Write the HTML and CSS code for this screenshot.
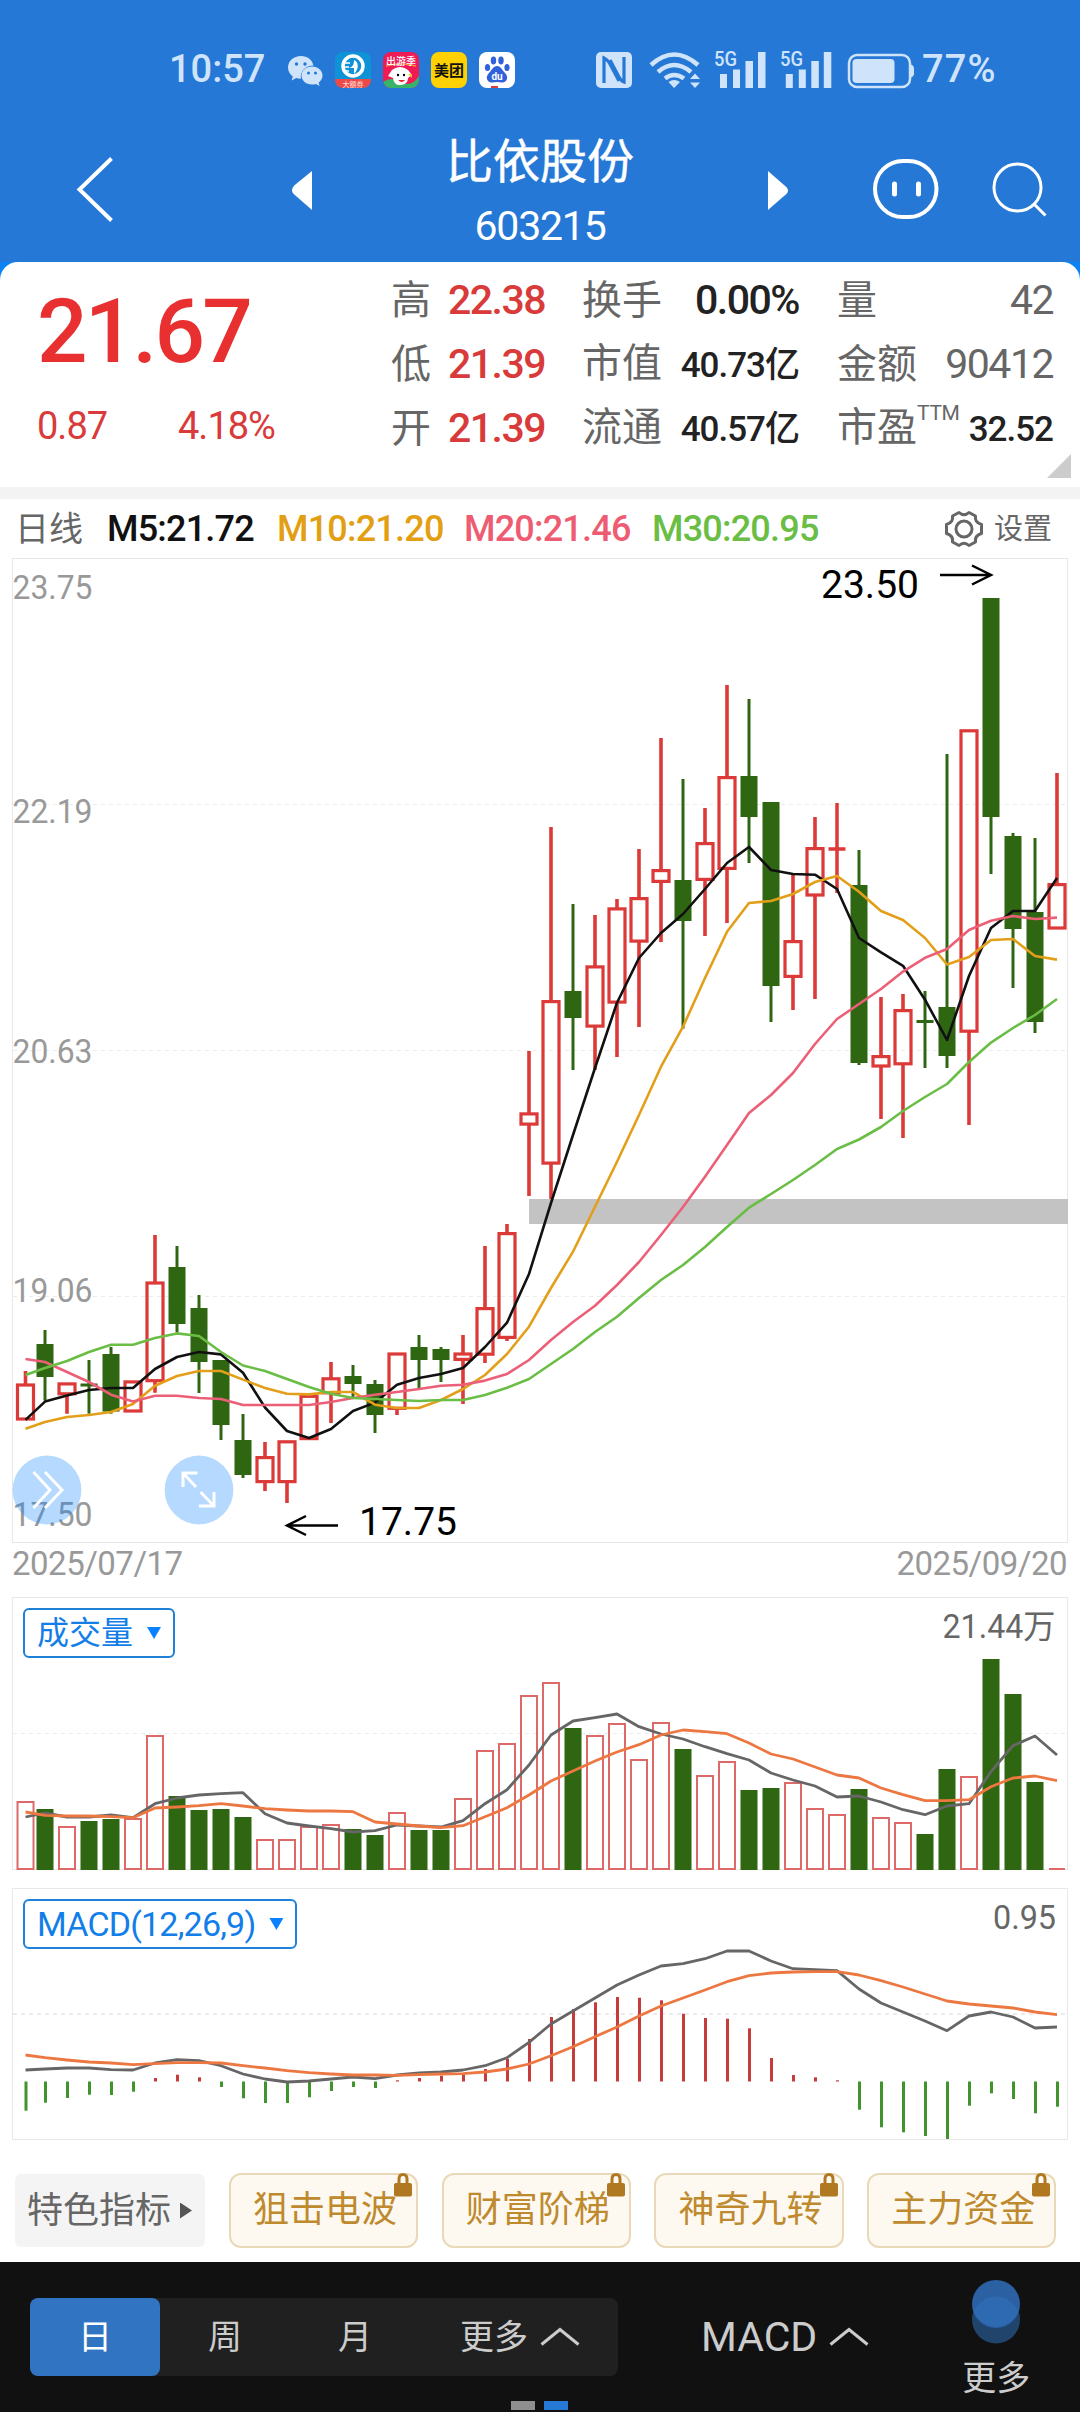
FILE: index.html
```html
<!DOCTYPE html>
<html lang="zh-CN">
<head>
<meta charset="utf-8">
<title>比依股份 603215</title>
<link rel="stylesheet" href="styles.css">
</head>
<body>
<header class="header">
  <div class="status">
    <span class="clock">10:57</span>
    <svg class="apps" width="230" height="40" viewBox="286 50 230 40">
      <g fill="#cfe4fb">
        <path d="M301 56c-7.500 0-13 5-13 11.500 0 3.800 1.900 6.800 4.800 9l-1.200 4 4.600-2.400c1.500.5 3 .7 4.800.7-1.500-7 4.500-13.300 12.400-13.300C312.200 59.800 307.500 56 301 56z"/>
        <path d="M312 66.500c-6 0-10.500 4-10.500 9s4.500 9 10.500 9c1.400 0 2.700-.2 3.900-.6l3.700 2-1-3.200c2.300-1.700 3.900-4.200 3.900-7.200 0-5-4.500-9-10.500-9z"/>
      </g>
      <g fill="#2578d5"><circle cx="296.500" cy="64" r="1.700"/><circle cx="305" cy="64" r="1.700"/><circle cx="308.500" cy="73" r="1.500"/><circle cx="315.500" cy="73" r="1.500"/></g>
      <clipPath id="a1"><rect x="335" y="52" width="36" height="36" rx="8"/></clipPath>
      <g clip-path="url(#a1)"><path fill="#0d93d6" d="M335 52h36v28h-36z"/><path fill="#ec4a48" d="M335 79h36v9h-36z"/>
        <circle cx="353" cy="66" r="10" fill="none" stroke="#fff" stroke-width="3.500"/><path d="M354 60c5 2 5 9 0 14v-6h-5c4-1 5-4 5-8z" fill="#fff"/><path d="M342 63h8M342 67h7M343 71h6" stroke="#fff" stroke-width="1.500"/></g>
      <text x="353" y="86.500" class="tiny" fill="#ffd2c8" font-size="7">大额券</text>
      <clipPath id="a2"><rect x="383" y="52" width="36" height="36" rx="8"/></clipPath>
      <g clip-path="url(#a2)"><path fill="#f01a55" d="M383 52h36v36h-36z"/><path fill="#38b46a" d="M383 82q8-6 18 0t18-6v12h-36z"/><path d="M386 66q14-4 30 0" stroke="#ff8b3d" stroke-width="1.500" fill="none"/>
        <path d="M392 70q8-6 16 0l4 5-4 3q0 6-7 7t-8-7l-5-2z" fill="#fff"/><path d="M408 74h4v4z" fill="#ffc229"/><circle cx="398" cy="75" r="1.200"/><circle cx="404" cy="75" r="1.200"/><path d="M398 80h7q-3 4-7 0z" fill="#e6202e"/></g>
      <text x="401" y="65" class="tiny" fill="#fff" font-size="10">出游季</text>
      <rect x="431" y="52" width="36" height="36" rx="8" fill="#ffd100"/>
      <text x="449" y="75.500" class="tiny" fill="#111" font-size="15" font-weight="700">美团</text>
      <rect x="479" y="52" width="36" height="36" rx="8" fill="#fff"/>
      <g fill="#2f62da"><ellipse cx="493.500" cy="60.500" rx="2.700" ry="4"/><ellipse cx="501" cy="60.500" rx="2.700" ry="4"/><ellipse cx="487.500" cy="67.500" rx="2.600" ry="3.600"/><ellipse cx="507" cy="67.500" rx="2.600" ry="3.600"/><path d="M497 66c4 0 5 4 8 7 4 4 2 9-2 9.500-2 .2-4-.5-6-.5s-4 .7-6 .5c-4-.5-6-5.500-2-9.500 3-3 4-7 8-7z"/></g>
      <text x="497" y="80" class="tiny" fill="#fff" font-size="10" font-weight="700">du</text>
      <path d="M491 86h7v2h-7z" fill="#e23b3b"/>
    </svg>
    <svg class="signals" width="320" height="44" viewBox="594 46 320 44">
      <rect x="596" y="51" width="36" height="36" rx="5" fill="#cfe4fb"/>
      <path d="M604 82V57q4 2 6 6l9 17M624 56v25q-3-1-5-5l-9-17" fill="none" stroke="#2578d5" stroke-width="3.200"/>
      <g fill="none" stroke="#cfe4fb" stroke-width="4.500"><path d="M651 64q23-21 47 0"/><path d="M658 71q16-14 33 0"/><path d="M665 77.500q9-7 19 0"/></g>
      <path d="M668.500 81q5.500-4 11.500 0l-6 6zM690 78l5-5.500 5 5.500zM690 81.500l5 5.500 5-5.500z" fill="#cfe4fb"/>
      <g id="cell" fill="#cfe4fb"><path d="M720 73h7v14h-7zM733 68.500h7V87h-7zM745.500 60h7.500v27h-7.500zM758 51h7.500v36H758z"/><text x="714" y="65" font-size="20" font-weight="500" textLength="23" lengthAdjust="spacingAndGlyphs">5G</text></g>
      <g fill="#cfe4fb"><path d="M785.800 73h7v14h-7zM798.800 68.500h7V87h-7zM811.300 60h7.500v27h-7.500zM823.800 51h7.500v36h-7.500z"/><text x="780" y="65" font-size="20" font-weight="500" textLength="23" lengthAdjust="spacingAndGlyphs">5G</text></g>
      <rect x="849" y="54" width="61" height="32" rx="8" fill="none" stroke="#cfe4fb" stroke-width="2.500"/>
      <rect x="852.500" y="58" width="42" height="24" rx="4" fill="#cfe4fb"/><path d="M911 63.500q3.500 1 3.500 6.500t-3.500 6.500z" fill="#cfe4fb"/>
    </svg>
    <span class="battery">77%</span>
  </div>
  <nav class="nav">
    <svg class="back" width="50" height="72" viewBox="70 152 50 72"><path d="M111.500 156.500 79.500 187.500 111.500 218.500" fill="none" stroke="#fff" stroke-width="4"/></svg>
    <svg class="tri" width="24" height="39" viewBox="0 0 24 39"><path d="M24 0v39L8 25Q0 19.500 8 13z" fill="#fff"/></svg>
    <div class="title"><h1>比依股份</h1><p>603215</p></div>
    <svg class="tri" width="24" height="39" viewBox="0 0 24 39"><path d="M0 0v39l16-14q8-5.500 0-11z" fill="#fff"/></svg>
    <svg class="face" width="70" height="64" viewBox="0 0 70 64"><rect x="3" y="3" width="61.500" height="56" rx="28" fill="none" stroke="#fff" stroke-width="4"/><path d="M22.500 26v10M46.500 26v10" stroke="#fff" stroke-width="5" stroke-linecap="round"/></svg>
    <svg class="search" width="60" height="64" viewBox="990 158 60 64"><circle cx="1017.500" cy="187.500" r="23.500" fill="none" stroke="#fff" stroke-width="3"/><path d="M1034.500 204.500l11 11" stroke="#fff" stroke-width="3"/></svg>
  </nav>
</header>

<section class="quote-wrap">
  <div class="quote">
    <div class="last">
      <strong>21.67</strong>
      <div class="change"><span>0.87</span><span>4.18%</span></div>
    </div>
    <dl class="stats s1">
      <div><dt>高</dt><dd class="up">22.38</dd></div>
      <div><dt>低</dt><dd class="up">21.39</dd></div>
      <div><dt>开</dt><dd class="up">21.39</dd></div>
    </dl>
    <dl class="stats s2">
      <div><dt>换手</dt><dd class="dark">0.00%</dd></div>
      <div><dt>市值</dt><dd class="dark small">40.73亿</dd></div>
      <div><dt>流通</dt><dd class="dark small">40.57亿</dd></div>
    </dl>
    <dl class="stats s3">
      <div><dt>量</dt><dd>42</dd></div>
      <div><dt>金额</dt><dd>90412</dd></div>
      <div><dt>市盈<sup>TTM</sup></dt><dd class="dark small">32.52</dd></div>
    </dl>
    <i class="corner"></i>
  </div>
</section>

<section class="legend">
  <span class="period">日线</span>
  <span class="m5">M5:21.72</span>
  <span class="m10">M10:21.20</span>
  <span class="m20">M20:21.46</span>
  <span class="m30">M30:20.95</span>
  <svg class="gear" width="40" height="38" viewBox="-20 -19 40 38"><g fill="none" stroke="#666" stroke-width="3"><circle r="8"/><path d="M-5-16.500Q0-12 5-16.500L11.500-13Q10.500-6.500 17.500-4.500V4.500Q10.500 6.500 11.500 13L5 16.500Q0 12-5 16.500L-11.500 13Q-10.500 6.500-17.500 4.500V-4.500Q-10.500-6.500-11.500-13z" stroke-linejoin="round"/></g></svg>
  <span class="settings">设置</span>
</section>

<section class="chart price">
  <svg id="price" width="1080" height="985" viewBox="0 558 1080 985"></svg>
  <svg class="fab f1" width="70" height="70" viewBox="-35 -35 70 70"><circle r="34.400" fill="#0a82ff" fill-opacity=".3"/><path d="M-13.500-18 3 0-13.500 18M-2-18 15 0-2 18" fill="none" stroke="#fff" stroke-width="3"/></svg>
  <svg class="fab f2" width="70" height="70" viewBox="-35 -35 70 70"><circle r="34.400" fill="#0a82ff" fill-opacity=".3"/><path d="M-1.500-17H-16V-3M-16-17-3-3M1.500 2 15 16M0 16H15V2" fill="none" stroke="#fff" stroke-width="3"/></svg>
</section>
<div class="dates"><span>2025/07/17</span><span>2025/09/20</span></div>

<section class="chart volume">
  <svg id="volume" width="1080" height="273" viewBox="0 1597 1080 273"></svg>
  <button class="pick">成交量<i></i></button>
</section>
<section class="chart macd">
  <svg id="macd" width="1080" height="252" viewBox="0 1888 1080 252"></svg>
  <button class="pick">MACD(12,26,9)<i></i></button>
</section>

<section class="chips">
  <span class="special">特色指标<i></i></span>
  <span class="chip">狙击电波<svg class="lock" width="18" height="24" viewBox="0 0 18 24"><path d="M5 11V6q0-4.500 4-4.500T13 6v5" fill="none" stroke="#b07820" stroke-width="3"/><rect y="10" width="18" height="13.500" rx="2" fill="#b07820"/></svg></span>
  <span class="chip">财富阶梯<svg class="lock" width="18" height="24" viewBox="0 0 18 24"><path d="M5 11V6q0-4.500 4-4.500T13 6v5" fill="none" stroke="#b07820" stroke-width="3"/><rect y="10" width="18" height="13.500" rx="2" fill="#b07820"/></svg></span>
  <span class="chip">神奇九转<svg class="lock" width="18" height="24" viewBox="0 0 18 24"><path d="M5 11V6q0-4.500 4-4.500T13 6v5" fill="none" stroke="#b07820" stroke-width="3"/><rect y="10" width="18" height="13.500" rx="2" fill="#b07820"/></svg></span>
  <span class="chip">主力资金<svg class="lock" width="18" height="24" viewBox="0 0 18 24"><path d="M5 11V6q0-4.500 4-4.500T13 6v5" fill="none" stroke="#b07820" stroke-width="3"/><rect y="10" width="18" height="13.500" rx="2" fill="#b07820"/></svg></span>
</section>

<footer class="footer">
  <div class="tabs">
    <span class="tab active">日</span><span class="tab">周</span><span class="tab">月</span>
    <span class="tab more">更多<svg width="40" height="20" viewBox="0 0 40 20"><path d="M1.500 17.500 20 2.500 38.500 17.500" fill="none" stroke="#ccc" stroke-width="3"/></svg></span>
  </div>
  <span class="indicator">MACD<svg width="40" height="20" viewBox="0 0 40 20"><path d="M1.500 17.500 20 2.500 38.500 17.500" fill="none" stroke="#ccc" stroke-width="3"/></svg></span>
  <div class="extra">
    <svg width="48" height="64" viewBox="0 0 48 64"><circle cx="24" cy="39.500" r="24" fill="#21446c"/><circle cx="24" cy="24" r="24" fill="#2b60a3"/><path d="M1.700 31.700a24 24 0 0 1 44.600 0 24 24 0 0 1-44.600 0z" fill="#2e6ab2"/></svg>
    <span>更多</span>
  </div>
  <div class="pager"><i></i><i class="on"></i></div>
</footer>
<script src="charts.js"></script>
</body>
</html>
```

FILE: styles.css
```css
* { box-sizing: border-box; margin: 0; padding: 0; }
body { width: 1080px; height: 2412px; overflow: hidden; background: #fff; color: #666; font-family: Roboto, "Noto Sans CJK SC", sans-serif; }
svg { display: block; flex: none; }
svg text { font-family: Roboto, "Noto Sans CJK SC", sans-serif; }
i { display: block; }

.header { height: 262px; background: #2578d5; color: #fff; }
.status { display: flex; align-items: center; height: 118px; padding: 20px 0 0 169px; color: #cfe4fb; font-weight: 500; }
.clock { width: 117px; font-size: 38px; line-height: 44px; }
.apps { margin-top: 2px; }
.tiny { text-anchor: middle; }
.signals { margin-left: 78px; }
.battery { margin-left: 8px; font-size: 38px; line-height: 44px; letter-spacing: 1.200px; }
.nav { display: flex; align-items: center; height: 144px; }
.back { margin: 0 168px 0 70px; }
.title { width: 456px; padding-top: 8px; text-align: center; white-space: nowrap; }
.title h1 { font-size: 47px; font-weight: 400; line-height: 64px; -webkit-text-stroke: .5px #fff; }
.title p { font-size: 41px; line-height: 64px; letter-spacing: -1.200px; }
.face { margin-left: 80px; }
.search { margin-left: 48px; }

.quote-wrap { height: 237px; background: linear-gradient(#0a84f5 40px, #f3f3f3 40px); }
.quote { position: relative; display: flex; height: 225px; padding-top: 6px; background: #fff; border-radius: 18px 18px 0 0; }
.last { width: 391px; padding-left: 37px; color: #e83030; white-space: nowrap; }
.last strong { display: block; padding-top: 12px; font-size: 89px; font-weight: 500; line-height: 104px; letter-spacing: -2.800px; }
.change { display: flex; padding-top: 20px; font-size: 38px; line-height: 44px; letter-spacing: -1px; color: #d93a3a; }
.change span:first-child { width: 141px; }
.stats div { display: flex; justify-content: space-between; align-items: baseline; height: 64px; white-space: nowrap; }
.stats dt, .stats dd { line-height: 64px; }
.stats dt { font-size: 40px; }
.stats dd { font-size: 41px; letter-spacing: -1.500px; }
.stats dd.small { font-size: 35px; letter-spacing: -1px; }
.stats .up { color: #d93a3a; font-weight: 500; }
.stats .dark { color: #222; font-weight: 500; }
.s1 { width: 154px; }
.s2 { width: 217px; margin-left: 37px; }
.s3 { width: 216px; margin-left: 38px; }
.stats sup { font-size: 21px; line-height: 0; vertical-align: 21px; letter-spacing: -.3px; }
.corner { position: absolute; right: 9px; bottom: 9px; width: 24px; height: 24px; background: #ccc; clip-path: polygon(100% 0, 100% 100%, 0 100%); }

.legend { display: flex; align-items: center; height: 59px; padding-left: 15px; font-size: 36px; font-weight: 500; letter-spacing: -.8px; white-space: nowrap; line-height: 58px; }
.period { width: 92px; font-size: 34px; font-weight: 400; letter-spacing: 0; }
.m5 { width: 170px; color: #111; }
.m10 { width: 187px; color: #e39f13; }
.m20 { width: 188px; color: #ee5c72; }
.m30 { width: 292px; color: #6abd45; }
.gear { margin-right: 10px; }
.settings { font-size: 29px; font-weight: 400; letter-spacing: 0; }

.chart { position: relative; }
.fab { position: absolute; top: 897px; }
.f1 { left: 12px; }
.f2 { left: 164px; }
.dates { display: flex; justify-content: space-between; height: 54px; padding: 0 13px 0 12px; font-size: 33px; line-height: 41px; letter-spacing: -.5px; color: #999; }
.macd { margin-top: 18px; }
.pick { position: absolute; left: 23px; top: 11px; display: flex; align-items: center; gap: 14px; height: 50px; padding: 0 12px; border: 2px solid #1f7fd9; border-radius: 6px; background: #fff; color: #137ee8; font: 32px/46px Roboto, "Noto Sans CJK SC", sans-serif; white-space: nowrap; }
.macd .pick { font-size: 34px; letter-spacing: -.8px; }
.pick i { width: 14px; height: 12px; background: #0a82ff; clip-path: polygon(0 0, 100% 0, 50% 100%); }

.chips { display: flex; height: 122px; padding: 33px 0 0 15px; font-size: 36px; line-height: 70px; white-space: nowrap; }
.special { display: flex; align-items: center; gap: 9px; width: 192px; height: 73px; margin: 1px 24px 0 0; padding-left: 12px; border-radius: 6px; background: #f4f4f4; }
.special i { width: 12px; height: 16px; background: #555; clip-path: polygon(0 0, 100% 50%, 0 100%); }
.chip { position: relative; width: 191px; height: 75px; margin-right: 23.600px; padding-left: 22px; border: 2px solid #ead9b8; border-radius: 12px; background: #fdf9f1; color: #bf8a2e; }
.lock { position: absolute; right: 4px; top: -2px; }

.footer { position: relative; display: flex; height: 150px; padding-left: 30px; background: #111; color: #ccc; font-size: 34px; }
.tabs { display: flex; width: 588px; height: 78px; margin-top: 36px; border-radius: 8px; background: #202020; line-height: 78px; }
.tab { width: 130px; text-align: center; }
.tab.active { border-radius: 8px; background: #3074c2; color: #fff; }
.tab.more { display: flex; align-items: center; gap: 12px; width: 198px; padding-left: 40px; }
.indicator { display: flex; align-items: center; gap: 12px; width: 300px; height: 78px; margin-top: 36px; padding-left: 83px; font-size: 41px; }
.extra { display: flex; flex-direction: column; align-items: center; width: 172px; padding: 18px 0 0; }
.extra span { line-height: 50px; margin-top: 9px; }
.pager { position: absolute; left: 511px; bottom: 2px; display: flex; gap: 9px; }
.pager i { width: 24px; height: 9px; background: #8f8f8f; }
.pager .on { background: #2578d5; }
```

FILE: charts.js
```js
const RED = '#dc3a38', GREEN = '#2f6612';
const cx = i => i ? 23 + 22 * i : 25.5;
const line = (ys, color, w) => `<polyline points="${ys.map((y, i) => cx(i) + ',' + y).join(' ')}" fill="none" stroke="${color}" stroke-width="${w}" stroke-linejoin="round"/>`;
const grid = (y, w = 1) => `<path d="M13 ${y}H1067" stroke="#ebebeb" stroke-width="${w}" stroke-dasharray="4 4"/>`;
const frame = (y1, y2) => `<rect x="12.5" y="${y1}" width="1055" height="${y2 - y1}" fill="none" stroke="#e8e8e8"/>`;
const label = (x, y, s, len, size, color, anchor = 'start') => `<text x="${x}" y="${y}" font-size="${size}" fill="${color}" text-anchor="${anchor}" textLength="${len}" lengthAdjust="spacingAndGlyphs">${s}</text>`;

// direction, high, body top, body bottom, low
const candles = [
  ['r',1371,1383.4,1420.6,1420],['g',1330,1344,1377,1400.6],['r',1383,1382.3,1395.4,1413.7],['g',1360,1383.5,1386.5,1413.7],
  ['g',1347,1354,1411.6,1413.7],['r',1381,1380.3,1412.6,1412],['r',1235,1281.4,1382.3,1392.7],['g',1246,1267,1324,1332.4],
  ['g',1295,1308,1362,1393],['g',1360,1360,1425,1440],['g',1414,1440,1475,1478],['r',1442,1456,1483.2,1491],
  ['r',1441,1440.2,1483.2,1503],['r',1394,1394.7,1440.2,1440],['r',1362,1377.2,1394.4,1423],['g',1365,1376,1384,1398],
  ['g',1380,1384,1415,1433],['r',1353,1352.4,1409.9,1415],['g',1335,1347,1360,1388.5],['g',1347,1349,1360,1382],
  ['r',1335,1352.4,1361,1404],['r',1246,1307,1355.8,1363],['r',1224,1232,1339,1341],['r',1051,1112.3,1125.7,1196],
  ['r',827,1000,1164.7,1199],['g',904,991,1018,1070],['r',915,965.3,1027.7,1070],['r',899,907.3,1003.7,1057],
  ['r',849,897,942.7,1027],['r',738,869,883,942],['g',779,880,921,1028.7],['r',808,842,881,936],
  ['r',685,776,870,923],['g',699,776,817,863],['g',802,802,986,1022],['r',875,940,978,1010],
  ['r',817,847,896.6,999],['r',803,847,851,893],['g',850,885,1063,1065],['r',997,1055,1067.6,1119],
  ['r',994,1009,1065.4,1138],['g',991,1020,1023,1068],['g',754,1007,1056,1068],['r',730,729.2,1032.8,1125],
  ['g',598,598,817,874],['g',833,836,929,988],['g',838,912,1022,1033],['r',773,883,929.6,929]
];
const ma5 = [1419.9,1401.6,1395.4,1390,1388,1388,1369,1357,1352,1354.4,1372.7,1407.5,1431,1438,1429,1411,1402.6,1384.7,1378,1374,1368,1347,1322.7,1274,1203,1135,1068,1002.7,958,933,914,889,863,847,870,874,874.7,889,938,952.4,965.8,999.7,1040,976,928,911,911,878];
const ma10 = [1428.8,1422,1417,1415,1412,1404,1385.8,1376,1371,1371,1379.6,1388,1393.7,1394.4,1392,1392,1404.7,1408,1408,1400,1389,1375,1354,1326.7,1288,1251.7,1206.7,1161.7,1115,1066.7,1026.7,978,931.7,903,901,894,882,876,891.7,911,920,938,964.5,957,940,939,956,959.6];
const ma20 = [1359,1362,1372,1382,1394.7,1401.6,1395.8,1395.8,1398,1399,1405,1405,1405,1405,1402,1398,1394.7,1392,1389,1385.8,1384.7,1380.6,1374,1360,1340,1322,1305.7,1285,1262,1235,1207,1176.7,1145,1113,1095,1073,1044,1019,1004,989,971.6,957.8,949,930,920.7,916,919,917.6];
const ma30 = [1375,1368,1361,1352,1344.8,1344.8,1338,1333.4,1336,1352,1365.5,1371,1379,1387,1393.7,1398,1399,1400,1401,1400,1400,1395,1387.7,1379,1364,1349,1332,1316.7,1298,1280,1265,1247,1227,1207.7,1194,1180,1165,1149,1139.5,1127,1111,1097,1084,1062,1042.6,1028,1015,999];

let s = frame(558.5, 1542.5) + grid(804.5) + grid(1050.5) + grid(1296.5);
[[599,'23.75'],[823,'22.19'],[1063,'20.63'],[1302,'19.06'],[1526,'17.50']].forEach(([y, t]) => s += label(12.5, y, t, 80, 34, '#999'));
candles.forEach(([d, hi, top, bot, lo], i) => {
  const x = cx(i);
  if (d === 'g') {
    s += `<path d="M${x} ${hi}V${lo}" stroke="${GREEN}" stroke-width="3"/><rect x="${x - 8.5}" y="${top}" width="17" height="${bot - top}" fill="${GREEN}"/>`;
  } else if (bot - top < 5) {
    s += `<path d="M${x} ${hi}V${lo}M${x - 8.5} ${(top + bot) / 2}h17" stroke="${RED}" stroke-width="3.5"/>`;
  } else {
    s += `<path d="M${x} ${hi}V${top + 1}M${x} ${bot - 1}V${Math.max(lo, bot - 1)}" stroke="${RED}" stroke-width="3.6"/><rect x="${x - 8}" y="${top + 1.6}" width="16" height="${bot - top - 3.2}" fill="none" stroke="${RED}" stroke-width="3.2"/>`;
  }
});
s += '<rect x="529" y="1199" width="539" height="25" fill="#c3c3c3"/>';
s += line(ma5, '#111', 2.6) + line(ma10, '#e39f1a', 2.6) + line(ma20, '#ec6077', 2.6) + line(ma30, '#6abd45', 2.6);
s += label(821, 598, '23.50', 98, 39, '#000') + label(359, 1535, '17.75', 98, 39, '#000');
s += '<path d="M940 575H991M972 565.500 991 575 972 584.500M338 1525.500H287M306 1516 287 1525.500 306 1535" fill="none" stroke="#000" stroke-width="2.500"/>';
document.getElementById('price').innerHTML = s;

const volumes = [1801,1809,1826,1821,1819,1818,1735,1796,1810,1809,1817,1839,1839,1826,1824,1829,1835,1812,1830,1830,1798,1750,1743,1695,1682,1728,1735,1723,1759,1722,1749,1775,1761,1790,1788,1782,1808,1814,1789,1817,1822,1834,1769,1776,1659,1694,1782,1868];
const vma5 = [1817,1813,1817,1817,1815,1817.7,1803.7,1798,1795,1793.7,1792.7,1813.7,1823,1826,1828.7,1832,1830.7,1825,1826,1827,1820.7,1803.7,1789.7,1765,1735,1721,1717.7,1714,1726.7,1734,1739,1746.7,1753.7,1760,1773,1780,1786,1797,1796,1802,1809.7,1814.7,1806,1803.7,1771.7,1745.7,1736,1755];
const vma10 = [1812,1815.3,1816,1816,1816.7,1817.7,1808,1807,1805.7,1803.7,1806,1808.7,1810,1811,1811,1811.7,1822,1824,1826,1827.7,1825.7,1816.7,1807.7,1795,1781,1771,1761,1752,1744.7,1735,1730,1731.7,1733.7,1743,1754,1759,1767,1775,1778,1788,1794.7,1800.7,1800.7,1799.7,1786.7,1778,1776,1780.7];
s = frame(1597.5, 1869.5) + grid(1733.5);
volumes.forEach((y, i) => {
  const x = cx(i);
  if (candles[i][0] === 'g') s += `<rect x="${x - 8.5}" y="${y}" width="17" height="${1870 - y}" fill="${GREEN}"/>`;
  else if (y > 1860) s += `<path d="M${x - 8} 1869h16" stroke="#dd6a69" stroke-width="2"/>`;
  else s += `<rect x="${x - 8}" y="${y + 1}" width="16" height="${1868 - y}" fill="none" stroke="#dd6a69" stroke-width="2"/>`;
});
s += line(vma5, '#666', 2.8) + line(vma10, '#ec7741', 2.8) + label(1055.5, 1638, '21.44万', 113, 33, '#666', 'end');
document.getElementById('volume').innerHTML = s;

const hist = [2110.7,2102.7,2098,2094.7,2095,2091.7,2078,2074.7,2077.3,2087,2098.3,2103,2103,2097.3,2091,2087,2088,2080.3,2078,2075.7,2075,2069,2058.7,2039,2017,2009,2002.3,1997,1997.7,2000.3,2013.7,2018,2018.7,2028.3,2058,2075,2077.3,2080.3,2109.7,2127.3,2132.3,2136,2139,2105.7,2093.3,2099,2113.3,2106.7];
const dif = [2070,2069,2068,2068,2069.7,2070,2063,2059.7,2060.7,2065.7,2074,2079,2082,2081,2079,2077,2078.7,2075,2073,2072,2070,2065.7,2057.7,2042.3,2024,2011,1998,1985,1975,1966,1963.7,1958.7,1951,1951,1961,1968.7,1969.7,1970.7,1989,2003,2012,2021,2030.7,2016,2012,2017,2028,2027];
const dea = [2055,2057.7,2060,2062,2063,2064.7,2063.7,2062.7,2062.7,2063,2065.7,2068,2070.7,2072.7,2074,2075,2075,2075.3,2074.7,2074,2073.7,2072,2069,2064,2055.7,2046.7,2036.7,2027,2016,2006,1998,1990,1981.7,1975.7,1973,1972,1971.7,1971.7,1975,1980.7,1987,1994,2001,2004,2006,2008,2012,2014.7];
s = frame(1888.5, 2139.5) + grid(2014, 2);
hist.forEach((y, i) => { s += `<path d="M${cx(i) + .5} 2081.5V${y}" stroke="${y > 2081.5 ? '#3f942d' : '#c63c3a'}" stroke-width="3"/>`; });
s += line(dif, '#666', 2.8) + line(dea, '#ec7741', 2.8) + label(1056, 1929, '0.95', 63, 34, '#666', 'end');
document.getElementById('macd').innerHTML = s;
```
